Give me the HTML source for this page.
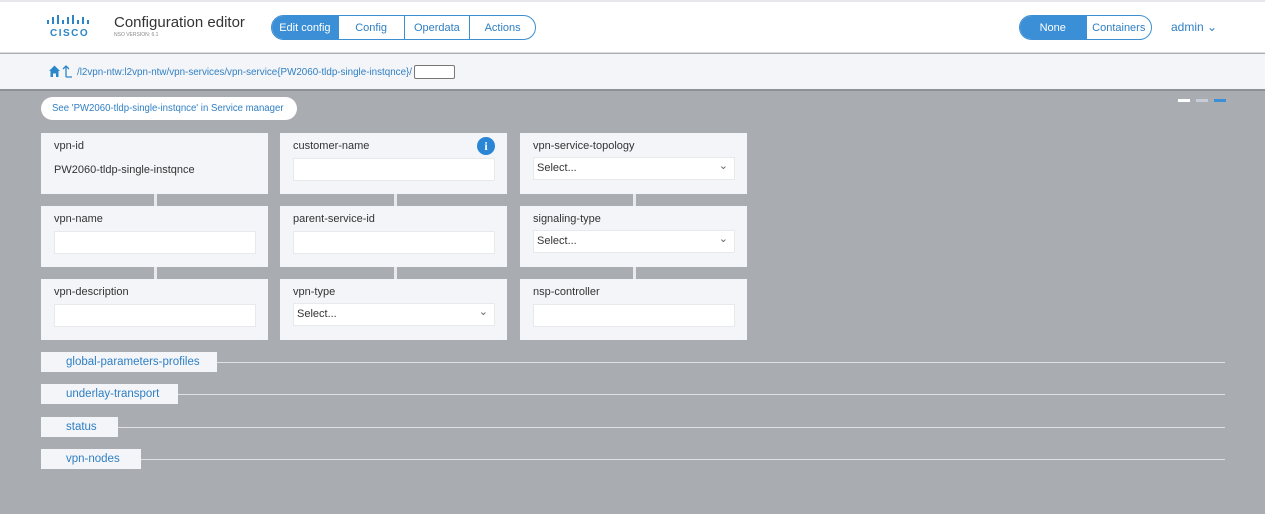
<!DOCTYPE html>
<html><head><meta charset="utf-8"><style>
*{margin:0;padding:0;box-sizing:border-box}
body{width:1265px;height:514px;overflow:hidden;background:#a9acb0;font-family:"Liberation Sans",sans-serif;position:relative}
.hdr{position:absolute;left:0;top:0;width:1265px;height:53px;background:#fff;border-top:2px solid #e6e7ea;border-bottom:1px solid #dcdde0}
.bc{position:absolute;left:0;top:54px;width:1265px;height:37px;background:#f4f5f8;border-bottom:2px solid #8e9195}
.abs{position:absolute}
.seg{position:absolute;top:15px;height:25px;border:1px solid #3d8fd1;border-radius:13px;display:flex;overflow:hidden;font-size:11px;color:#2f7fc3}
.seg div{display:flex;align-items:center;justify-content:center;border-left:1px solid #3d8fd1}
.seg div:first-child{border-left:none;background:#3a8fd6;color:#fff}
.card{position:absolute;width:227px;height:61px;background:#f3f5f9}
.card .l{position:absolute;left:13px;top:7px;font-size:11px;color:#333}
.inp{position:absolute;left:13px;top:25px;width:202px;height:23px;background:#fff;border:1px solid #e8e9ec;font-size:11px;color:#333;padding:4px 3px}
.inp.s::after{content:"⌄";position:absolute;right:6px;top:1px;font-size:11px;color:#666}
.con{position:absolute;width:3px;height:12px;background:#e8eaee}
.sec{position:absolute;left:41px;height:20px;background:#f3f5f9;font-size:11.5px;color:#2f7fc3;padding:4px 0 0 25px}
.secl{position:absolute;left:100px;width:1125px;height:1px;background:#dfe1e4}
</style></head><body>
<div class="hdr"></div>
<svg class="abs" style="left:47px;top:15px" width="44" height="12"><g fill="#2a86c8">
<rect x="0" y="5" width="2" height="4"/><rect x="5" y="2" width="2" height="7"/><rect x="10" y="0" width="2" height="9"/><rect x="15" y="5" width="2" height="4"/><rect x="20" y="2" width="2" height="7"/><rect x="25" y="0" width="2" height="9"/><rect x="30" y="5" width="2" height="4"/><rect x="35" y="2" width="2" height="7"/><rect x="40" y="5" width="2" height="4"/></g></svg>
<div class="abs" style="left:50px;top:28px;font-size:10px;font-weight:bold;color:#2a86c8;letter-spacing:1.5px">CISCO</div>
<div class="abs" style="left:114px;top:14px;font-size:15px;color:#333">Configuration editor</div>
<div class="abs" style="left:114px;top:32px;font-size:5px;color:#888">NSO VERSION: 6.1</div>
<div class="seg" style="left:271px;width:265px"><div style="width:66px">Edit config</div><div style="width:66px">Config</div><div style="width:66px">Operdata</div><div style="width:66px">Actions</div></div>
<div class="seg" style="left:1019px;width:133px"><div style="width:66px">None</div><div style="width:66px">Containers</div></div>
<div class="abs" style="left:1171px;top:20px;font-size:12px;color:#2f7fc3">admin ⌄</div>
<div class="bc"></div>
<svg class="abs" style="left:48px;top:64px" width="28" height="14"><path d="M1 7L6.5 1.5 12 7H10.5V13H8V9.5H5V13H2.5V7Z" fill="#2a86c8"/><path d="M18 13V2M15 5L18 2 21 5M18 13H24" stroke="#2a86c8" stroke-width="1.3" fill="none"/></svg>
<div class="abs" style="left:77px;top:66px;font-size:10.5px;color:#2f7fc3;white-space:nowrap;transform:scaleX(0.935);transform-origin:0 0">/l2vpn-ntw:l2vpn-ntw/vpn-services/vpn-service{PW2060-tldp-single-instqnce}/</div>
<div class="abs" style="left:414px;top:65px;width:41px;height:14px;background:#fff;border:1px solid #777;border-radius:2px"></div>
<div class="abs" style="left:41px;top:97px;width:256px;height:23px;background:#fff;border-radius:12px;font-size:10px;color:#2f7fc3;padding:6px 0 0 11px;white-space:nowrap"><span style="display:inline-block;transform:scaleX(0.96);transform-origin:0 0">See 'PW2060-tldp-single-instqnce' in Service manager</span></div>
<div class="abs" style="left:1178px;top:99px;width:12px;height:3px;background:#fff"></div>
<div class="abs" style="left:1196px;top:99px;width:12px;height:3px;background:#c8ccd6"></div>
<div class="abs" style="left:1214px;top:99px;width:12px;height:3px;background:#3a8fd6"></div>

<div class="card" style="left:41px;top:133px"><div class="l">vpn-id</div><div class="abs" style="left:13px;top:31px;font-size:11px;color:#333">PW2060-tldp-single-instqnce</div></div>
<div class="card" style="left:280px;top:133px"><div class="l">customer-name</div><div class="inp"></div>
<div class="abs" style="left:197px;top:4px;width:18px;height:18px;border-radius:50%;background:#2a86d4;color:#fff;font-weight:bold;font-size:12px;text-align:center;line-height:18px;font-family:'Liberation Serif',serif">i</div></div>
<div class="card" style="left:520px;top:133px"><div class="l">vpn-service-topology</div><div class="inp s" style="top:24px">Select...</div></div>
<div class="card" style="left:41px;top:206px"><div class="l">vpn-name</div><div class="inp"></div></div>
<div class="card" style="left:280px;top:206px"><div class="l">parent-service-id</div><div class="inp"></div></div>
<div class="card" style="left:520px;top:206px"><div class="l">signaling-type</div><div class="inp s" style="top:24px">Select...</div></div>
<div class="card" style="left:41px;top:279px"><div class="l">vpn-description</div><div class="inp"></div></div>
<div class="card" style="left:280px;top:279px"><div class="l">vpn-type</div><div class="inp s" style="top:24px">Select...</div></div>
<div class="card" style="left:520px;top:279px"><div class="l">nsp-controller</div><div class="inp"></div></div>

<div class="con" style="left:154px;top:194px"></div><div class="con" style="left:394px;top:194px"></div><div class="con" style="left:633px;top:194px"></div>
<div class="con" style="left:154px;top:267px"></div><div class="con" style="left:394px;top:267px"></div><div class="con" style="left:633px;top:267px"></div>

<div class="secl" style="top:362px"></div><div class="sec" style="top:352px;width:176px">global-parameters-profiles</div>
<div class="secl" style="top:394px"></div><div class="sec" style="top:384px;width:137px">underlay-transport</div>
<div class="secl" style="top:427px"></div><div class="sec" style="top:417px;width:77px">status</div>
<div class="secl" style="top:459px"></div><div class="sec" style="top:449px;width:100px">vpn-nodes</div>
</body></html>
